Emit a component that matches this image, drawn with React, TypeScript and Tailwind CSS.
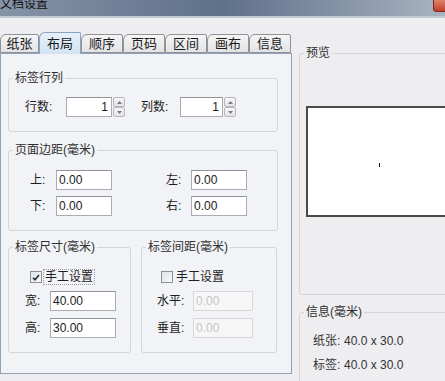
import React from "react";

const Spin = () => (
  <div className="flex flex-col w-[12px] h-[20px] ml-[1px]">
    <div className="h-[10px] border border-[#b5b8bd] rounded-[2px] bg-gradient-to-b from-[#f7f7f7] to-[#e4e4e4] flex items-center justify-center">
      <svg width="5" height="3" viewBox="0 0 5 3"><path d="M0 3 L2.5 0 L5 3 Z" fill="#7a7a7a" /></svg>
    </div>
    <div className="h-[10px] border border-[#b5b8bd] rounded-[2px] bg-gradient-to-b from-[#f7f7f7] to-[#e4e4e4] flex items-center justify-center">
      <svg width="5" height="3" viewBox="0 0 5 3"><path d="M0 0 L2.5 3 L5 0 Z" fill="#7a7a7a" /></svg>
    </div>
  </div>
);

const Input = ({ w, value, right, disabled }: { w: string; value: string; right?: boolean; disabled?: boolean }) => (
  <div
    className={`${w} h-[20px] border flex items-center text-[12px] leading-[18px] ${
      disabled
        ? "border-[#d6d8db] bg-[#f6f6f7] text-[#c4c6c9]"
        : "border-[#a9acb2] border-t-[#8f949b] bg-white text-[#1b1b1b]"
    } ${right ? "justify-end pr-[3px]" : "pl-[2px]"}`}
  >
    {value}
  </div>
);

const Check = ({ checked }: { checked?: boolean }) => (
  <div className="w-[12px] h-[12px] border border-[#8e8f8f] bg-gradient-to-br from-[#dfe3e8] to-[#f8f9fa] flex items-center justify-center">
    {checked && (
      <svg width="8" height="7" viewBox="0 0 8 7">
        <path d="M1 3.8 L3 5.8 L7 1" stroke="#1f2a44" strokeWidth="1.6" fill="none" />
      </svg>
    )}
  </div>
);

const Legend = ({ children }: { children: React.ReactNode }) => (
  <legend className="ml-[4px] px-[2px] text-[12px] leading-[16px] text-[#2f2f2f]">{children}</legend>
);

const tabs = ["纸张", "布局", "顺序", "页码", "区间", "画布", "信息"];

export default function App() {
  return (
    <div className="w-[445px] h-[381px] overflow-hidden bg-[#eeeef1] font-['Liberation_Sans','Noto_Sans_CJK_SC',sans-serif] text-[#1e1e1e] flex flex-col">
      {/* title bar */}
      <div className="relative h-[18px] shrink-0 bg-gradient-to-r from-[#8694a8] via-[#5f708a] to-[#a9b4c2] border-b-2 border-b-[#c3cad4]">
        <div className="absolute left-[0px] top-[-4px] text-[12px] leading-[16px] text-[#111]">文档设置</div>
        <div className="absolute right-[-6px] top-[-2px] w-[18px] h-[14px] rounded-bl-[3px] border border-[#7a2a22] bg-gradient-to-b from-[#e0866d] to-[#c13f2d]" />
      </div>

      <div className="flex flex-row items-start">
        {/* left column */}
        <div className="w-[292px] shrink-0 pt-[14px] flex flex-col">
          <div className="h-[21px] flex flex-row items-end relative z-10">
            {tabs.map((t, i) => {
              const sel = i === 1;
              return (
                <div
                  key={t}
                  className={`${i === 0 ? "w-[39px]" : "w-[42px]"} ${
                    sel
                      ? "h-[22px] -mb-[1px] bg-gradient-to-b from-[#e6f0fa] to-[#d3e3f3] border-[#8ba3bf] border-b-0"
                      : "h-[19px] bg-gradient-to-b from-[#f5f5f5] to-[#e2e3e5] border-[#8f9296]"
                  } border rounded-tl-[6px] rounded-tr-[2px] flex items-center justify-center text-[13px] leading-[16px] text-[#1a1a1a]`}
                >
                  {t}
                </div>
              );
            })}
          </div>
          <div className="h-[321px] border border-[#8ea3ba] bg-[#f2f3f6] pl-[7px] pt-[16px] flex flex-col">
            {/* 标签行列 */}
            <fieldset className="w-[270px] h-[62px] border border-[#d3d5d9] rounded-[3px]">
              <Legend>标签行列</Legend>
              <div className="pt-[11px] pl-[16px] flex flex-row items-center text-[12px]">
                <span className="w-[41px]">行数:</span>
                <Input w="w-[46px]" value="1" right />
                <Spin />
                <span className="w-[39px] ml-[16px]">列数:</span>
                <Input w="w-[43px]" value="1" right />
                <Spin />
              </div>
            </fieldset>

            {/* 页面边距 */}
            <fieldset className="mt-[10px] w-[270px] h-[89px] border border-[#d3d5d9] rounded-[3px]">
              <Legend>页面边距(毫米)</Legend>
              <div className="pt-[12px] pl-[21px] flex flex-col gap-[6px] text-[12px]">
                <div className="flex flex-row items-center">
                  <span className="w-[26px]">上:</span>
                  <Input w="w-[56px]" value="0.00" />
                  <span className="w-[25px] ml-[54px]">左:</span>
                  <Input w="w-[56px]" value="0.00" />
                </div>
                <div className="flex flex-row items-center">
                  <span className="w-[26px]">下:</span>
                  <Input w="w-[56px]" value="0.00" />
                  <span className="w-[25px] ml-[54px]">右:</span>
                  <Input w="w-[56px]" value="0.00" />
                </div>
              </div>
            </fieldset>

            <div className="mt-[8px] flex flex-row gap-[10px]">
              {/* 标签尺寸 */}
              <fieldset className="w-[123px] h-[114px] border border-[#d3d5d9] rounded-[3px]">
                <Legend>标签尺寸(毫米)</Legend>
                <div className="pt-[14px] flex flex-col text-[12px]">
                  <div className="pl-[21px] flex flex-row items-center h-[16px]">
                    <Check checked />
                    <span className="ml-[1px] px-[1px] border border-dotted border-[#9a9a9a] leading-[14px]">手工设置</span>
                  </div>
                  <div className="pl-[16px] mt-[6px] flex flex-row items-center">
                    <span className="w-[25px]">宽:</span>
                    <Input w="w-[66px]" value="40.00" />
                  </div>
                  <div className="pl-[16px] mt-[7px] flex flex-row items-center">
                    <span className="w-[25px]">高:</span>
                    <Input w="w-[66px]" value="30.00" />
                  </div>
                </div>
              </fieldset>

              {/* 标签间距 */}
              <fieldset className="w-[136px] h-[114px] border border-[#d3d5d9] rounded-[3px]">
                <Legend>标签间距(毫米)</Legend>
                <div className="pt-[14px] flex flex-col text-[12px]">
                  <div className="pl-[19px] flex flex-row items-center h-[16px]">
                    <Check />
                    <span className="ml-[3px] leading-[14px]">手工设置</span>
                  </div>
                  <div className="pl-[15px] mt-[6px] flex flex-row items-center">
                    <span className="w-[36px]">水平:</span>
                    <Input w="w-[60px]" value="0.00" disabled />
                  </div>
                  <div className="pl-[15px] mt-[7px] flex flex-row items-center">
                    <span className="w-[36px]">垂直:</span>
                    <Input w="w-[60px]" value="0.00" disabled />
                  </div>
                </div>
              </fieldset>
            </div>
          </div>
        </div>

        {/* right column */}
        <div className="w-[170px] shrink-0 pt-[27px] pl-[7px] flex flex-col">
          <fieldset className="w-[163px] h-[250px] border border-[#d3d5d9] rounded-[3px]">
            <Legend>预览</Legend>
            <div className="pt-[45px] pl-[6px]">
              <div className="w-[160px] h-[111px] bg-white border-2 border-[#4a4a4a] relative">
                <div className="absolute left-[71px] top-[55px] w-[1px] h-[4px] bg-[#111]" />
              </div>
            </div>
          </fieldset>
          <fieldset className="mt-[9px] w-[163px] h-[100px] border border-[#d3d5d9] rounded-[3px]">
            <Legend>信息(毫米)</Legend>
            <div className="pt-[13px] pl-[13px] flex flex-col gap-[8px] text-[12px] leading-[16px] text-[#333]">
              <div className="flex flex-row">
                <span className="w-[31px]">纸张:</span>
                <span>40.0 x 30.0</span>
              </div>
              <div className="flex flex-row">
                <span className="w-[31px]">标签:</span>
                <span>40.0 x 30.0</span>
              </div>
            </div>
          </fieldset>
        </div>
      </div>
    </div>
  );
}
